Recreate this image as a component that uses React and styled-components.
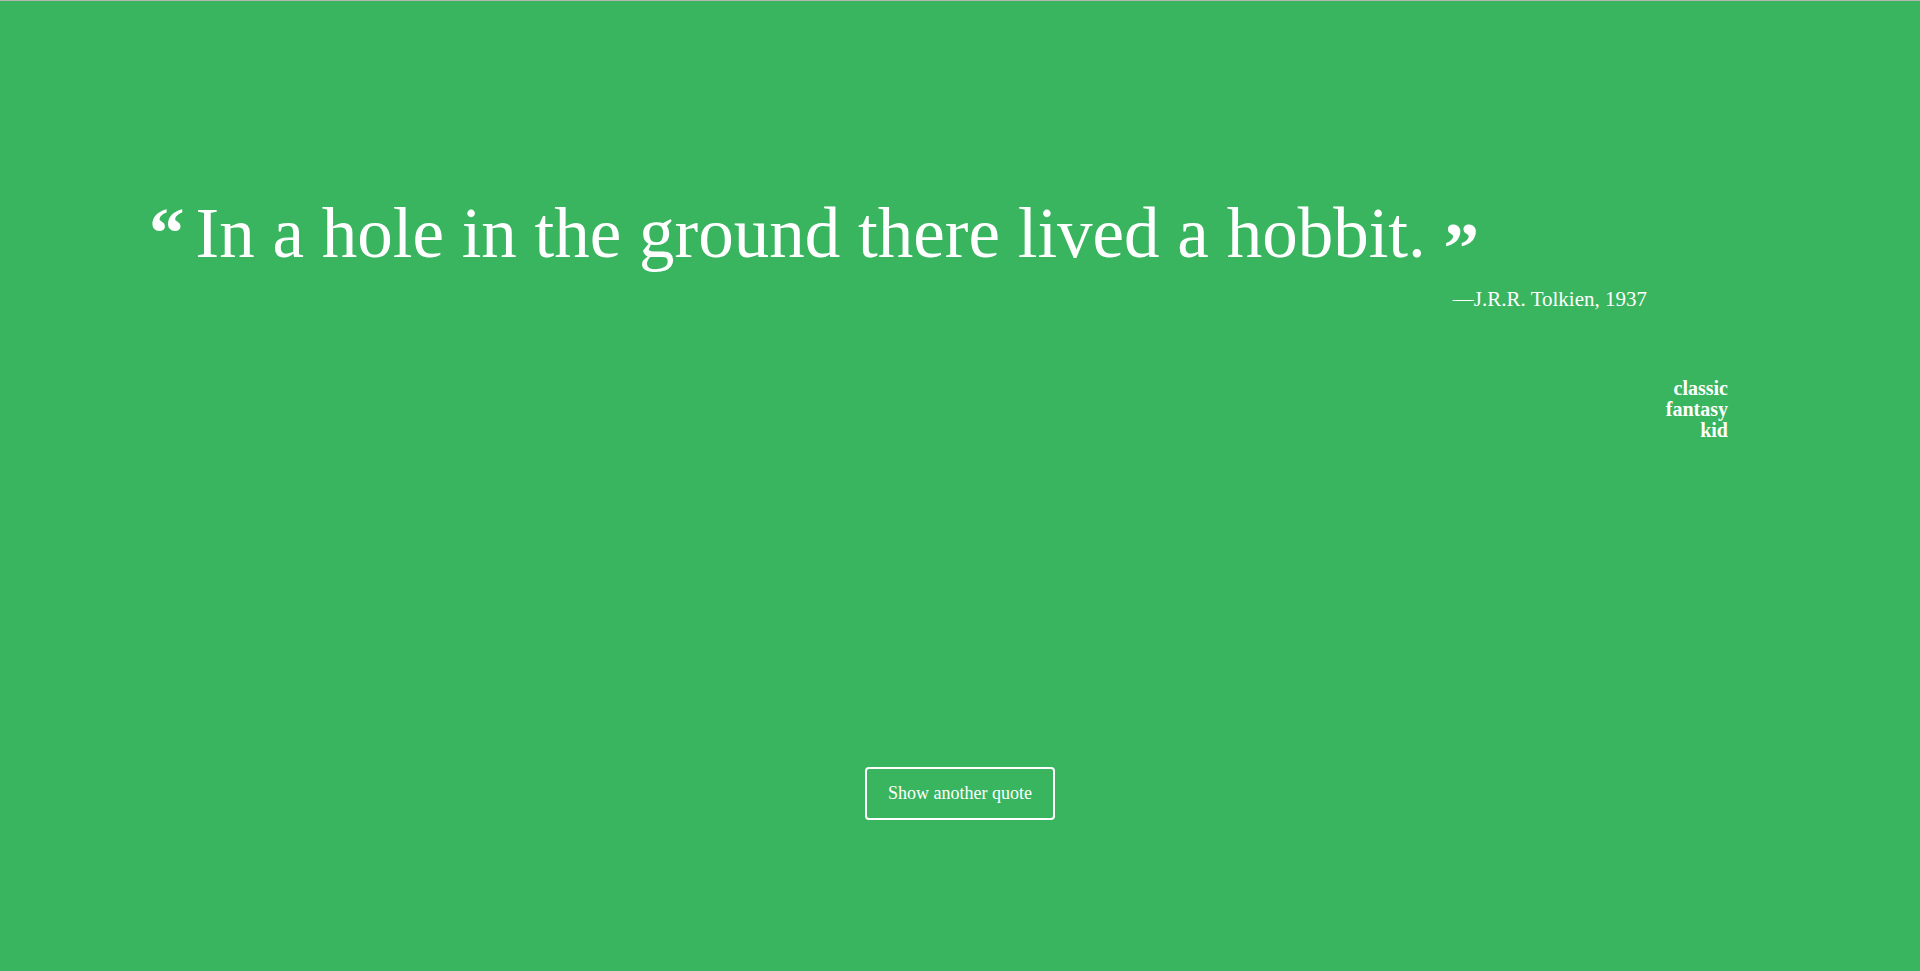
import React, { useState } from 'react';
import styled, { createGlobalStyle } from 'styled-components';

const GlobalStyle = createGlobalStyle`
  html, body {
    margin: 0;
    padding: 0;
    background: #38b55e;
  }
`;

const Page = styled.main`
  min-height: 100vh;
  box-sizing: border-box;
  border-top: 1px solid #b5b5b5;
  background-color: #38b55e;
  color: #ffffff;
  font-family: 'Liberation Serif', 'DejaVu Serif', serif;
  display: flex;
  flex-direction: column;
  padding: 197px 192px 0 149px;
`;

const QuoteLine = styled.blockquote`
  margin: 0;
  font-size: 71px;
  line-height: 1;
  font-weight: 400;
  white-space: nowrap;
`;

const Mark = styled.span`
  font-weight: 700;
  line-height: 0;
  margin-right: ${props => (props.$closing ? '0' : '11px')};
  vertical-align: ${props => (props.$closing ? '-15px' : 'baseline')};
`;

const Attribution = styled.cite`
  display: block;
  margin-top: 20px;
  padding-right: 81px;
  text-align: right;
  font-style: normal;
  font-size: 21px;
  line-height: 1;
`;

const Tags = styled.ul`
  list-style: none;
  margin: 68px 0 0;
  padding: 0;
  text-align: right;
  font-size: 20px;
  line-height: 21px;
  font-weight: 700;
`;

const ButtonRow = styled.div`
  display: flex;
  justify-content: center;
  margin: 326px -192px 0 -149px;
`;

const Button = styled.button`
  box-sizing: border-box;
  width: 190px;
  height: 53px;
  border: 2px solid #ffffff;
  border-radius: 4px;
  background: transparent;
  color: #ffffff;
  font-family: 'Liberation Serif', 'DejaVu Serif', serif;
  font-size: 18px;
  cursor: pointer;
  transition: background-color 0.2s ease;

  &:hover {
    background-color: rgba(255, 255, 255, 0.1);
  }
`;

const quotes = [
  {
    text: 'In a hole in the ground there lived a hobbit.',
    author: 'J.R.R. Tolkien',
    year: 1937,
    tags: ['classic', 'fantasy', 'kid'],
  },
];

export default function App() {
  const [index, setIndex] = useState(0);
  const quote = quotes[index];

  return (
    <>
      <GlobalStyle />
      <Page>
        <QuoteLine>
          <Mark>“</Mark>{quote.text} <Mark $closing>”</Mark>
        </QuoteLine>
        <Attribution>—{quote.author}, {quote.year}</Attribution>
        <Tags>
          {quote.tags.map(tag => (
            <li key={tag}>{tag}</li>
          ))}
        </Tags>
        <ButtonRow>
          <Button onClick={() => setIndex((index + 1) % quotes.length)}>
            Show another quote
          </Button>
        </ButtonRow>
      </Page>
    </>
  );
}
